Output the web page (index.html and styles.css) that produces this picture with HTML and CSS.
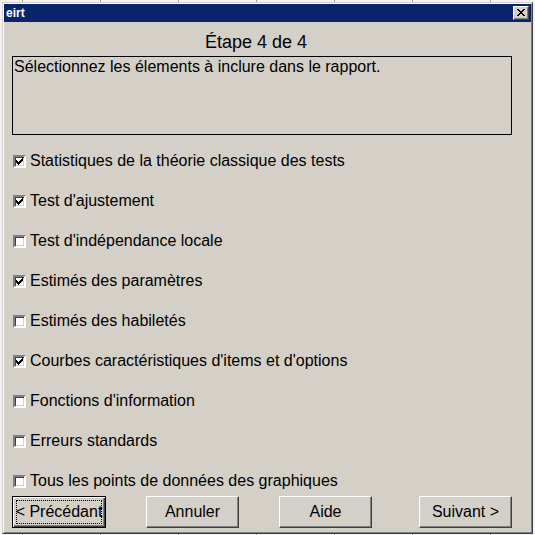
FILE: index.html
```html
<!DOCTYPE html>
<html lang="fr">
<head>
    <meta charset="UTF-8">
    <meta name="viewport" content="width=device-width, initial-scale=1.0">
    <title>eirt</title>
    <link rel="stylesheet" href="styles.css">
</head>
<body>
    <div class="window">
        <div class="frame">
            <div class="titlebar">
                <span class="title">eirt</span>
                <span class="close">
                    <svg width="8" height="7" viewBox="0 0 8 7" shape-rendering="crispEdges">
                        <path d="M0 0h2v1h1v1h2v-1h1v-1h2v1h-1v1h-1v1h-1v1h1v1h1v1h1v1h-2v-1h-1v-1h-2v1h-1v1h-2v-1h1v-1h1v-1h1v-1h-1v-1h-1v-1h-1z" fill="#000"/>
                    </svg>
                </span>
            </div>

            <div class="content">
                <h1 class="step">Étape 4 de 4</h1>
                <div class="desc">Sélectionnez les élements à inclure dans le rapport.</div>

                <ul class="options">
                    <li class="option"><span class="box checked"></span>Statistiques de la théorie classique des tests</li>
                    <li class="option"><span class="box checked"></span>Test d'ajustement</li>
                    <li class="option"><span class="box"></span>Test d'indépendance locale</li>
                    <li class="option"><span class="box checked"></span>Estimés des paramètres</li>
                    <li class="option"><span class="box"></span>Estimés des habiletés</li>
                    <li class="option"><span class="box checked"></span>Courbes caractéristiques d'items et d'options</li>
                    <li class="option"><span class="box"></span>Fonctions d'information</li>
                    <li class="option"><span class="box"></span>Erreurs standards</li>
                    <li class="option"><span class="box"></span>Tous les points de données des graphiques</li>
                </ul>

                <div class="buttons">
                    <button class="btn default">&lt; Précédant</button>
                    <button class="btn">Annuler</button>
                    <button class="btn">Aide</button>
                    <button class="btn last">Suivant &gt;</button>
                </div>
            </div>
        </div>
    </div>
</body>
</html>
```

FILE: styles.css
```css
body { margin: 0; background-color: #f2f2f8; background-image: repeating-linear-gradient(90deg, transparent 0, transparent 22px, #a0a0a8 22px, #a0a0a8 23px, transparent 23px, transparent 78px); font-family: "Liberation Sans", Arial, sans-serif; color: #000; }

.window { width: 529px; height: 530px; margin: 2px 0 0 2px; border: 1px solid; border-color: #d4d0c8 #404040 #404040 #d4d0c8; background: #d4d0c8; }
.frame { height: 528px; border: 1px solid; border-color: #fff #808080 #808080 #fff; display: flex; flex-direction: column; }

.titlebar { height: 18px; background: #0a246a; display: flex; align-items: center; justify-content: space-between; padding: 0 2px; }
.title { color: #fff; font-weight: bold; font-size: 12px; }
.close { width: 14px; height: 12px; background: #d4d0c8; border: 1px solid; border-color: #fff #404040 #404040 #fff; box-shadow: inset -1px -1px #808080; display: flex; align-items: center; justify-content: center; }
.close svg { display: block; margin: 0 0 1px 0; }

.content { flex: 1; padding: 0 19px 4px 8px; display: flex; flex-direction: column; }

.step { margin: 9px 12px 3px 0; font-size: 18px; font-weight: normal; line-height: 22px; text-align: center; }

.desc { height: 77px; border: 1px solid #000; font-size: 16px; line-height: 20px; padding: 0 0 0 1px; }

.options { list-style: none; margin: 16px 0 0 0; padding: 0 0 0 1px; display: flex; flex-direction: column; gap: 20px; }
.option { height: 20px; line-height: 20px; font-size: 16px; display: flex; align-items: center; gap: 4px; }

.box { width: 9px; height: 9px; background: #fff; border: 2px solid; border-color: #808080 #fff #fff #808080; box-shadow: inset 1px 1px #404040, inset -1px -1px #d4d0c8; flex-shrink: 0; }
.box.checked { background: #fff url("data:image/svg+xml,%3Csvg xmlns='http://www.w3.org/2000/svg' width='7' height='7' viewBox='0 0 7 7' shape-rendering='crispEdges'%3E%3Cpath d='M0 2h1v1h1v1h1v-1h1v-1h1v-1h1v-1h1v3h-1v1h-1v1h-1v1h-1v1h-1v-1h-1v-1h-1v-1z' fill='%23000'/%3E%3C/svg%3E") no-repeat 1px 1px; }

.buttons { display: flex; margin-top: 5px; }
.btn { width: 93px; height: 32px; margin: 0 0 0 40px; padding: 0; background: #d4d0c8; border: 1px solid; border-color: #fff #404040 #404040 #fff; box-shadow: inset -1px -1px #808080; font-family: "Liberation Sans", Arial, sans-serif; font-size: 16px; color: #000; cursor: pointer; }
.btn.default { width: 94px; margin-left: 0; border-color: #000; box-shadow: inset 1px 1px #fff, inset -1px -1px #404040, inset -2px -2px #808080; outline: 1px dotted #000; outline-offset: -5px; }
.btn.last { margin-left: auto; }
```
